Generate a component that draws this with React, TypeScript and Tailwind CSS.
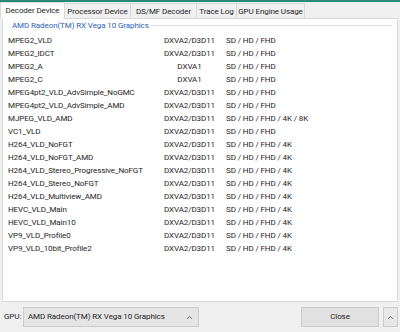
import { ChevronUp } from "lucide-react";

const rows: [string, string, string][] = [
  ["MPEG2_VLD", "DXVA2/D3D11", "SD / HD / FHD"],
  ["MPEG2_IDCT", "DXVA2/D3D11", "SD / HD / FHD"],
  ["MPEG2_A", "DXVA1", "SD / HD / FHD"],
  ["MPEG2_C", "DXVA1", "SD / HD / FHD"],
  ["MPEG4pt2_VLD_AdvSimple_NoGMC", "DXVA2/D3D11", "SD / HD / FHD"],
  ["MPEG4pt2_VLD_AdvSimple_AMD", "DXVA2/D3D11", "SD / HD / FHD"],
  ["MJPEG_VLD_AMD", "DXVA2/D3D11", "SD / HD / FHD / 4K / 8K"],
  ["VC1_VLD", "DXVA2/D3D11", "SD / HD / FHD"],
  ["H264_VLD_NoFGT", "DXVA2/D3D11", "SD / HD / FHD / 4K"],
  ["H264_VLD_NoFGT_AMD", "DXVA2/D3D11", "SD / HD / FHD / 4K"],
  ["H264_VLD_Stereo_Progressive_NoFGT", "DXVA2/D3D11", "SD / HD / FHD / 4K"],
  ["H264_VLD_Stereo_NoFGT", "DXVA2/D3D11", "SD / HD / FHD / 4K"],
  ["H264_VLD_Multiview_AMD", "DXVA2/D3D11", "SD / HD / FHD / 4K"],
  ["HEVC_VLD_Main", "DXVA2/D3D11", "SD / HD / FHD / 4K"],
  ["HEVC_VLD_Main10", "DXVA2/D3D11", "SD / HD / FHD / 4K"],
  ["VP9_VLD_Profile0", "DXVA2/D3D11", "SD / HD / FHD / 4K"],
  ["VP9_VLD_10bit_Profile2", "DXVA2/D3D11", "SD / HD / FHD / 4K"],
];

export default function App() {
  return (
    <div className="w-[400px] h-[332px] bg-[#f0f0f0] flex flex-col overflow-hidden font-['Roboto',sans-serif] text-[8px] tracking-[-0.1px] text-[#1e1e1e]">
      <div className="h-[2px] bg-[#2b8a76]" />

      {/* tabs */}
      <div className="h-[17px] flex items-end relative z-10 -mb-px">
        <div className="w-[65px] h-[17px] flex items-center justify-center bg-white border border-b-0 border-[#d9d9d9]">
          Decoder Device
        </div>
        <div className="w-[66px] h-[16px] flex items-center justify-center border-t border-r border-[#d9d9d9]">
          Processor Device
        </div>
        <div className="w-[66px] h-[16px] flex items-center justify-center border-t border-r border-[#d9d9d9]">
          DS/MF Decoder
        </div>
        <div className="w-[40px] h-[16px] flex items-center justify-center border-t border-r border-[#d9d9d9]">
          Trace Log
        </div>
        <div className="w-[68px] h-[16px] flex items-center justify-center border-t border-r border-[#d9d9d9]">
          GPU Engine Usage
        </div>
      </div>

      {/* panel */}
      <div className="ml-[2px] mr-[2px] h-[284px] bg-white border border-[#d9d9d9] flex flex-col">
        <div className="flex items-center pl-[9px] pr-[5px] h-[13px]">
          <span className="text-[#2c62b8]">AMD Radeon(TM) RX Vega 10 Graphics</span>
          <div className="flex-1 h-px bg-[#dcdcdc] ml-[3px]" />
        </div>
        <div className="mt-[2px]">
          {rows.map(([name, api, res]) => (
            <div key={name} className="grid grid-cols-[155px_63px_1fr] h-[13px] items-center">
              <span className="pl-[5px] whitespace-nowrap">{name}</span>
              <span className="text-center whitespace-nowrap">{api}</span>
              <span className="pl-[5px] whitespace-nowrap">{res}</span>
            </div>
          ))}
        </div>
      </div>

      {/* bottom bar */}
      <div className="flex items-center flex-1 pl-[4px] pr-[2px]">
        <span className="w-[19px]">GPU:</span>
        <div className="w-[176px] h-[20px] bg-[#e5e5e5] border border-[#cccccc] flex items-center pl-[4px] pr-[4px]">
          <span className="flex-1">AMD Radeon(TM) RX Vega 10 Graphics</span>
          <ChevronUp className="w-[9px] h-[9px] text-[#444]" strokeWidth={2} />
        </div>
        <div className="flex-1" />
        <div className="w-[78px] h-[20px] bg-[#e1e1e1] border border-[#cccccc] flex items-center justify-center">
          Close
        </div>
        <div className="w-[15px] h-[20px] ml-[4px] bg-[#e8e8e8] border border-[#cccccc] flex items-center justify-center">
          <ChevronUp className="w-[9px] h-[9px] text-[#444]" strokeWidth={2} />
        </div>
      </div>
    </div>
  );
}
